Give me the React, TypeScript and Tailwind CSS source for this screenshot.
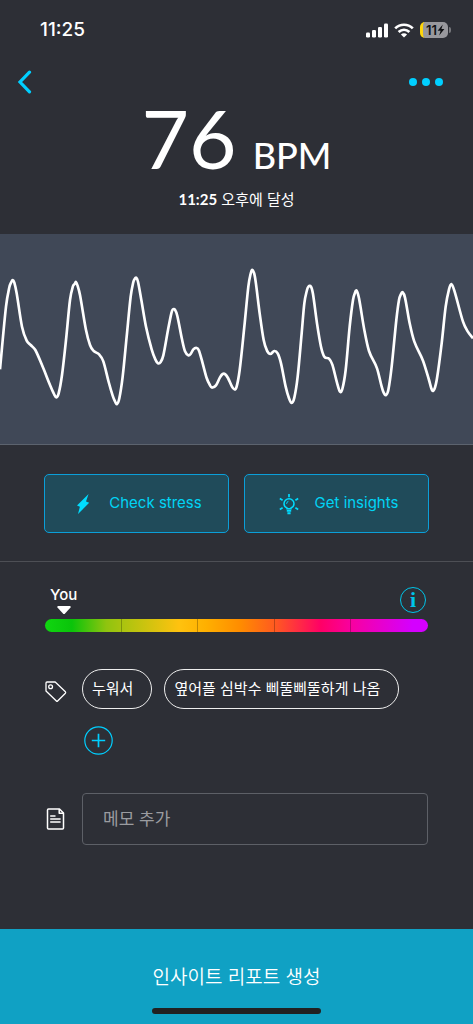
import React from 'react';

// pulse samples, x / y
const pulse = [
  [0, 418], [18, 230], [28, 172], [34, 156], [38, 150], [43, 158], [50, 190], [66, 290], [80, 332], [92, 345], [106, 360],
  [130, 415], [150, 465], [162, 492], [169, 502], [176, 490], [186, 435], [198, 330], [210, 210], [219, 168], [224, 162],
  [228, 156], [233, 168], [240, 195], [258, 300], [270, 345], [280, 362], [298, 374], [310, 394], [326, 456], [338, 497],
  [344, 512], [351, 522], [358, 505], [368, 440], [380, 320], [392, 200], [400, 156], [404, 147], [409, 143], [414, 155],
  [424, 210], [438, 290], [455, 358], [466, 388], [474, 400], [482, 396], [490, 376], [504, 300], [514, 250], [518, 239],
  [525, 239], [532, 258], [546, 328], [555, 364], [565, 376], [572, 372], [580, 358], [590, 354], [597, 362], [608, 400],
  [620, 444], [630, 466], [636, 473], [648, 466], [660, 442], [668, 432], [676, 433], [684, 444], [696, 470], [702, 477],
  [709, 473], [719, 420], [733, 290], [745, 170], [751, 135], [757, 120], [765, 142], [779, 250], [791, 330], [801, 362],
  [811, 372], [823, 363], [833, 370], [843, 400], [857, 470], [867, 505], [875, 519], [883, 503], [893, 440], [905, 310],
  [913, 220], [921, 180], [925, 170], [933, 170], [939, 192], [951, 280], [963, 350], [973, 380], [987, 386], [997, 404],
  [1011, 458], [1020, 485], [1027, 477], [1037, 420], [1049, 290], [1059, 210], [1065, 188], [1070, 182], [1077, 205],
  [1093, 300], [1107, 363], [1131, 415], [1145, 470], [1151, 488], [1158, 495], [1165, 480], [1175, 410], [1189, 270],
  [1197, 210], [1203, 192], [1208, 187], [1215, 203], [1229, 280], [1243, 335], [1269, 392], [1287, 450], [1296, 480],
  [1303, 478], [1311, 445], [1325, 340], [1337, 230], [1347, 178], [1354, 162], [1363, 182], [1389, 275], [1403, 304],
  [1419, 325],
];

// smooth curve through every sample
function toPath(pts: number[][]) {
  let d = `M${pts[0][0]} ${pts[0][1]}`;
  for (let i = 0; i < pts.length - 1; i++) {
    const a = pts[i - 1] || pts[i];
    const b = pts[i];
    const c = pts[i + 1];
    const e = pts[i + 2] || c;
    const k = (c[0] - b[0]) / 3;
    const m1 = (c[1] - a[1]) / (c[0] - a[0]);
    const m2 = (e[1] - b[1]) / (e[0] - b[0]);
    d += ` C${b[0] + k} ${b[1] + m1 * k} ${c[0] - k} ${c[1] - m2 * k} ${c[0]} ${c[1]}`;
  }
  return d;
}

const tags = ['누워서', '옆어플 심박수 삐뚤삐뚤하게 나옴'];

function StatusBar() {
  return (
    <div className="flex h-[60px] items-center justify-between pl-10 pr-[22px]">
      <time className="text-[19px] font-medium leading-6">11:25</time>
      <div className="flex items-center gap-1.5">
        <svg width="22" height="15" viewBox="0 0 22 15" fill="#fff">
          <rect x="0" y="9.5" width="4" height="5" rx="1.2" />
          <rect x="6" y="7" width="4" height="7.5" rx="1.2" />
          <rect x="12" y="4" width="4" height="10.5" rx="1.2" />
          <rect x="18" y="0.5" width="4" height="14" rx="1.2" />
        </svg>
        <svg width="20" height="15" viewBox="0 0 20 15" fill="none" stroke="#fff" strokeWidth="2.7">
          <path d="M1.2 5.4C6.2 0.5 13.8 0.5 18.8 5.4" />
          <path d="M4.6 9C7.8 6 12.2 6 15.4 9" />
          <path d="M6.9 11.4C8.7 9.8 11.3 9.8 13.1 11.4L10 14.6Z" fill="#fff" stroke="none" />
        </svg>
        <div className="flex items-center gap-px">
          <div className="flex h-4 w-7 items-center justify-center overflow-hidden rounded-[5px] border-l-[3px] border-[#ffd60a] bg-[#98989d] text-[#101114]">
            <span className="text-[13px] font-semibold leading-4">11</span>
            <svg width="8" height="12" viewBox="0 0 8 12" fill="currentColor">
              <path d="M5.8 0.5L0.6 6.8H3.6L2.2 11.5L7.4 5.1H4.4Z" />
            </svg>
          </div>
          <i className="h-1.5 w-0.5 rounded-r bg-[#77787d]"></i>
        </div>
      </div>
    </div>
  );
}

export default function App() {
  return (
    <div className="flex min-h-screen flex-col bg-[#2d2f36] font-['Inter','Noto_Sans_CJK_KR',sans-serif] text-white">
      <StatusBar />

      <header className="flex h-11 items-center justify-between pl-4 pr-[30px]">
        <button type="button" aria-label="back" className="text-[#00cfff]">
          <svg width="18" height="24" viewBox="0 0 18 24" fill="none" stroke="currentColor" strokeWidth="3.2" strokeLinecap="round" strokeLinejoin="miter">
            <path d="M13.5 2.2L4 12L13.5 21.8" />
          </svg>
        </button>
        <button type="button" aria-label="more" className="flex gap-[5px]">
          <i className="size-2 rounded-full bg-[#00cfff]"></i>
          <i className="size-2 rounded-full bg-[#00cfff]"></i>
          <i className="size-2 rounded-full bg-[#00cfff]"></i>
        </button>
      </header>

      {/* 심박수 */}
      <section className="flex h-[130px] flex-col items-center text-center">
        <h1 className="flex items-baseline gap-4 font-['Lato',sans-serif]">
          <span className="text-[82px] leading-[66px]">76</span>
          <span className="text-[36px] font-medium leading-9">BPM</span>
        </h1>
        <p className="mt-3.5 text-[15px] leading-6">
          <b className="font-['Lato',sans-serif] text-[15px] leading-6">11:25</b> 오후에 달성
        </p>
      </section>

      <div className="border-b border-[#5c636e] bg-[#404857]">
        <svg className="block h-[210px] w-full" viewBox="0 12 1419 630" preserveAspectRatio="none" fill="none" stroke="#fff" strokeWidth="8" strokeLinejoin="round">
          <path d={toPath(pulse)} />
        </svg>
      </div>

      <div className="grid grid-cols-2 gap-[15px] border-b border-[#4d4f55] px-11 pt-[29px] pb-7">
        <button type="button" className="flex h-[59px] items-center justify-center gap-[18px] rounded-[5px] border border-[#0b9fd9] bg-[#204b5a] pl-1 text-[15px] text-[#00d4f5]">
          <svg width="16" height="22" viewBox="0 0 16 22" fill="#00dcff">
            <path d="M13.6 1L2 12.4L4.9 13.7L3 21L14.2 9.8L11 8.6Z" />
          </svg>
          Check stress
        </button>
        <button type="button" className="flex h-[59px] items-center justify-center gap-4 rounded-[5px] border border-[#0b9fd9] bg-[#204b5a] pl-1 text-[15px] text-[#00d4f5]">
          <svg width="20" height="22" viewBox="0 0 20 22" fill="none" stroke="#00dcff" strokeWidth="1.5">
            <path d="M8 15.8V15C6.2 14.2 5 12.6 5 10.8A5 5 0 0 1 15 10.8C15 12.6 13.8 14.2 12 15V15.8Z" />
            <path d="M7.6 10.8A2.6 2.6 0 0 1 9.4 8.3" strokeWidth="1" />
            <path d="M10 1V4.2M0.8 5.6L3.6 7.2M19.2 5.6L16.4 7.2M0.8 16.4L3.6 14.8M19.2 16.4L16.4 14.8" strokeWidth="1.7" />
            <path d="M7.8 17.8H12.2M8.4 20.2H11.6" strokeWidth="2" />
          </svg>
          Get insights
        </button>
      </div>

      <section className="px-[45px] pt-[23px]">
        <div className="flex h-[34px] items-start justify-between pl-[5px] pr-0.5">
          <div className="flex flex-col items-center">
            <span className="text-[15px] font-medium leading-5">You</span>
            <svg width="14" height="8" viewBox="0 0 14 8" fill="#fff" className="mt-px">
              <path d="M1 0H13L14 1L7.6 8H6.4L0 1Z" />
            </svg>
          </div>
          <button type="button" aria-label="info" className="mt-0.5 flex size-[26px] items-center justify-center rounded-full border-[1.5px] border-[#00c4e8] font-['Liberation_Serif',serif] text-[22px] font-bold leading-none text-[#00c4e8]">i</button>
        </div>
        <div className="grid h-[13px] grid-cols-5 divide-x divide-black/25 overflow-hidden rounded-full bg-[linear-gradient(90deg,#10d610_0%,#0ac40a_7%,#8fc40f_16%,#a8c40f_20%,#ffc20f_35%,#ffb000_42%,#ff8c00_51%,#ff5a20_60%,#ff0066_72%,#f800a0_80%,#d400ff_96%)]">
          <i></i><i></i><i></i><i></i><i></i>
        </div>
      </section>

      <section className="mt-[37px] flex px-[45px]">
        <svg width="22" height="22" viewBox="0 0 22 22" fill="none" stroke="#fff" strokeWidth="1.3" strokeLinejoin="round" className="mt-3 flex-none">
          <path d="M1 2Q1 1 2 1H10.2L20.4 10.8Q21 11.5 20.4 12.2L12.6 20Q12 20.6 11.4 20L1 10Z" />
          <circle cx="5.6" cy="5.8" r="1.9" />
        </svg>
        <div className="ml-[15px] flex flex-1 flex-wrap gap-x-3 gap-y-[17px]">
          {tags.map((tag) => (
            <button type="button" key={tag} className="h-10 rounded-full border-[1.5px] border-[#eee] pl-[9px] pr-[18px] text-[15px]">{tag}</button>
          ))}
          <div className="w-full pl-0.5">
            <button type="button" aria-label="add tag" className="block text-[#00cfff]">
              <svg width="29" height="29" viewBox="0 0 29 29" fill="none" stroke="currentColor">
                <circle cx="14.5" cy="14.5" r="13.7" strokeWidth="1.2" />
                <path d="M14.5 7.8V21.2M7.8 14.5H21.2" strokeWidth="1.7" />
              </svg>
            </button>
          </div>
        </div>
      </section>

      <section className="mt-[38px] flex items-center px-[45px]">
        <svg width="20" height="22" viewBox="0 0 20 22" fill="none" stroke="#fff" strokeWidth="1.5" strokeLinejoin="round" className="flex-none">
          <path d="M3.5 1H14.5L18.5 5V20Q18.5 21 17.5 21H3.5Q2.5 21 2.5 20V2Q2.5 1 3.5 1Z" />
          <path d="M14.2 1V5.2H18.5" />
          <path d="M5.2 8H10.5M5.2 11H15.6M5.2 14H15.6" />
        </svg>
        <input
          type="text" aria-label="메모 추가" placeholder="메모 추가"
          className="ml-[17px] h-[52px] min-w-0 flex-1 rounded-[4px] border border-[#5d6067] bg-transparent px-5 text-[17px] placeholder:text-[#9b9ca0]"
        />
      </section>

      <button type="button" className="mt-auto flex h-[95px] flex-col items-center bg-[#10a1c4] pt-[35px]">
        <span className="text-[19px] font-[350] leading-7">인사이트 리포트 생성</span>
        <i className="mt-4 h-1.5 w-[169px] rounded-full bg-[#212121]"></i>
      </button>
    </div>
  );
}
